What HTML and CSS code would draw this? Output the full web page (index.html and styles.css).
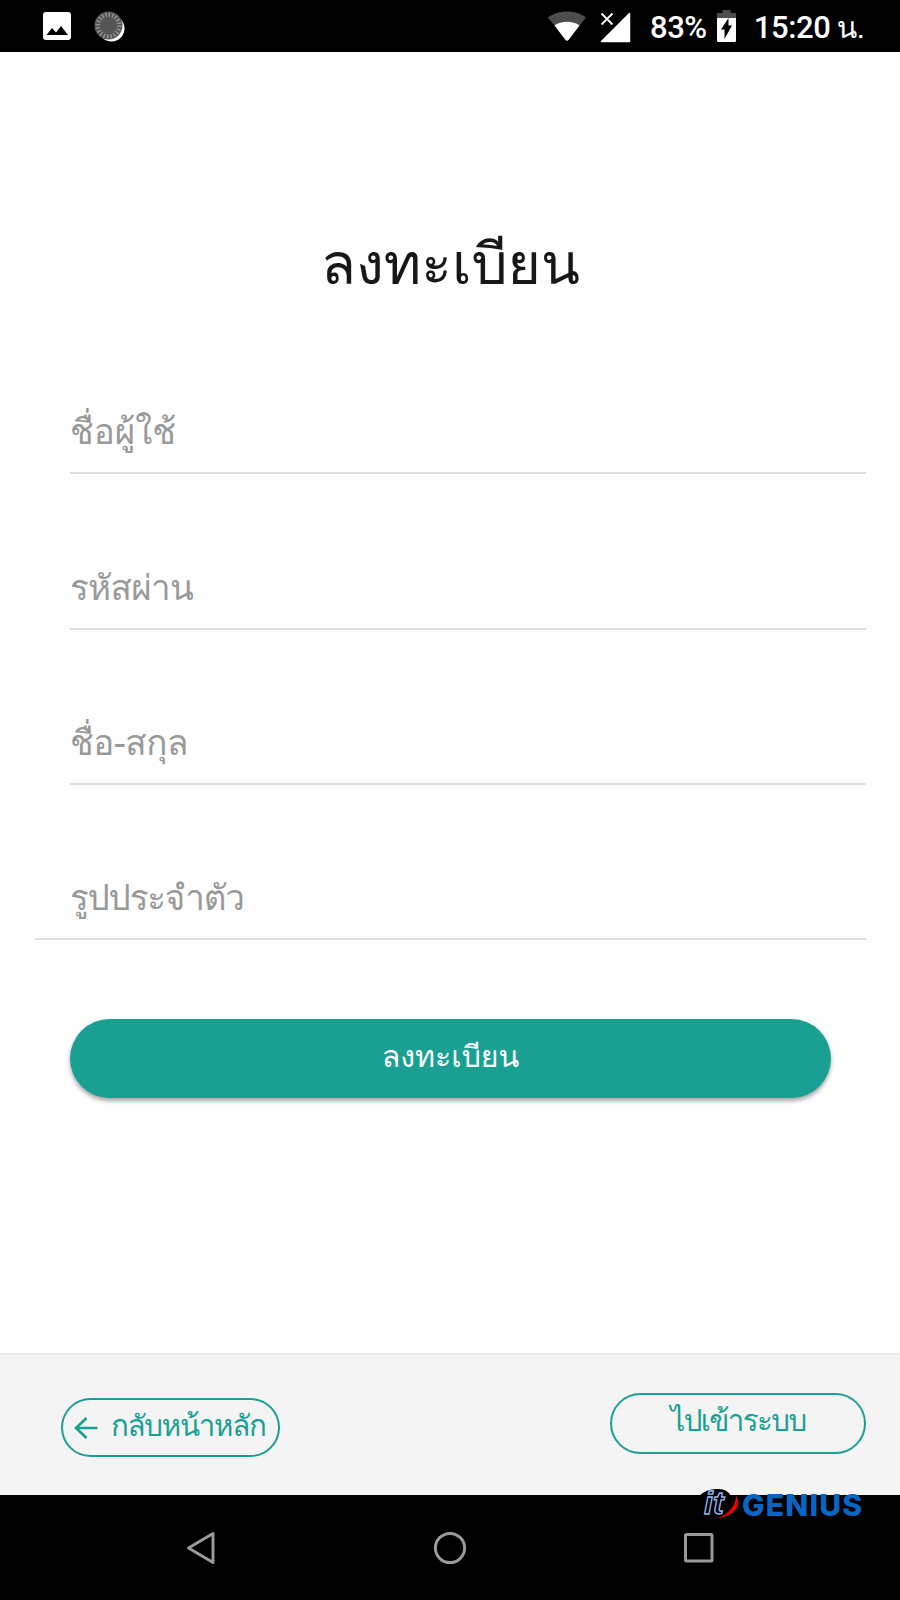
FILE: index.html
```
<!DOCTYPE html>
<html lang="th">
<head>
    <meta charset="UTF-8">
    <meta name="viewport" content="width=device-width, initial-scale=1.0">
    <title>ลงทะเบียน</title>
    <link rel="stylesheet" href="styles.css">
</head>
<body>
    <div class="screen">
        <div class="status-bar">
            <svg class="icon-image" width="30" height="30" viewBox="0 0 30 30">
                <rect x="1" y="1" width="28" height="28" rx="3" fill="#fff"/>
                <path d="M4.500 24l5.500-7 4 4.500 5-6.500 7 9z" fill="#000"/>
            </svg>
            <svg class="icon-sync" width="32" height="32" viewBox="0 0 32 32">
                <circle cx="17.500" cy="17.500" r="13" fill="#fff"/>
                <circle cx="14.500" cy="14.500" r="14" fill="#555"/>
                <circle cx="14.500" cy="14.500" r="10.800" fill="none" stroke="#999" stroke-width="4.500" stroke-dasharray="1.300 2.093"/>
            </svg>
            <div class="status-right">
                <svg class="icon-wifi" width="38" height="30" viewBox="0 0 38 30">
                    <path d="M0 6.500C10-1.500 28-1.500 38 6.500L19 30z" fill="#4d4d4d"/>
                    <path d="M6.500 14.500C13 9.500 25 9.500 31.500 14.500L20.500 29q-1.500 1.500-3 0z" fill="#fff"/>
                </svg>
                <svg class="icon-signal" width="31" height="31" viewBox="0 0 31 31">
                    <path d="M29.500 1.500v28h-28z" fill="#fff" stroke="#fff" stroke-width="1.500" stroke-linejoin="round"/>
                    <path d="M1.500 1.500l11 11M12.500 1.500l-11 11" stroke="#fff" stroke-width="1.800"/>
                </svg>
                <span class="battery-text">83%</span>
                <svg class="icon-battery" width="19" height="32" viewBox="0 0 19 32">
                    <path d="M5.500 0h8v3H19v6H0V3h5.500z" fill="#4d4d4d"/>
                    <path d="M0 8h19v22.500q0 1.500-1.500 1.500h-16Q0 32 0 30.500z" fill="#fff"/>
                    <path d="M11.500 8v7.500H15L7.500 29v-9.500H4z" fill="#000"/>
                </svg>
                <span class="clock">15:20 <span class="clock-unit">น.</span></span>
            </div>
        </div>

        <div class="content">
            <h1>ลงทะเบียน</h1>

            <form class="register-form">
                <div class="field"><label>ชื่อผู้ใช้</label></div>
                <div class="field field-password"><label>รหัสผ่าน</label></div>
                <div class="field field-name"><label>ชื่อ-สกุล</label></div>
                <div class="field field-last"><label>รูปประจำตัว</label></div>
                <button type="button" class="submit-button">ลงทะเบียน</button>
            </form>
        </div>

        <div class="footer">
            <a class="back-button">
                <svg width="24" height="24" viewBox="0 0 24 24">
                    <path d="M12.500 2L2 12l10.500 10M2 12h21.500" fill="none" stroke="#1aa093" stroke-width="2.600"/>
                </svg>
                <span>กลับหน้าหลัก</span>
            </a>
            <a class="login-button">ไปเข้าระบบ</a>
        </div>

        <div class="nav-bar">
            <svg class="nav-back" width="30" height="34" viewBox="0 0 30 34">
                <path d="M27 2.500v29L2.500 17z" fill="none" stroke="#999" stroke-width="3" stroke-linejoin="round"/>
            </svg>
            <svg class="nav-home" width="34" height="34" viewBox="0 0 34 34">
                <circle cx="17" cy="17" r="14.600" fill="none" stroke="#999" stroke-width="3"/>
            </svg>
            <svg class="nav-recent" width="30" height="30" viewBox="0 0 30 30">
                <rect x="1.500" y="1.500" width="26.500" height="26.500" rx="1" fill="none" stroke="#999" stroke-width="3"/>
            </svg>
            <div class="watermark">
                <svg width="42" height="31" viewBox="0 0 42 31">
                    <path d="M0 8Q8 0 20 1q8 0 12 7z" fill="#000"/>
                    <path d="M37 7q5 9-1 15-7 8-19 8 10-2 15-9 5-6 5-14z" fill="#f00000"/>
                    <text x="5" y="26" class="logo-it">it</text>
                </svg>
                <span class="logo-name">GENIUS</span>
            </div>
        </div>
    </div>
</body>
</html>
```
FILE: styles.css
```
* {
    box-sizing: border-box;
}

body {
    margin: 0;
    font-family: Loma, "Liberation Sans", sans-serif;
    background: #fefefe;
}

.screen {
    width: 900px;
    height: 1600px;
    display: flex;
    flex-direction: column;
    overflow: hidden;
}

.status-bar {
    height: 52px;
    background: #000;
    color: #fff;
    display: flex;
    align-items: flex-start;
    padding: 11px 36px 0 42px;
    font-family: Roboto, sans-serif;
    font-size: 31px;
    font-weight: 500;
    line-height: 34px;
    letter-spacing: -0.4px;
}

.icon-sync {
    margin-left: 22px;
}

.status-right {
    display: flex;
    margin-left: auto;
}

.icon-signal {
    margin: 1px 0 0 14px;
}

.battery-text {
    margin-left: 19px;
}

.icon-battery {
    margin: -1px 18px 0 10px;
}

.clock-unit {
    margin-left: -1px;
    font-family: Loma, "Liberation Sans", sans-serif;
    font-size: 30px;
    line-height: 0;
    letter-spacing: -0.8px;
}

.content {
    height: 1301px;
    padding: 171px 34px 0 35px;
}

h1 {
    margin: 0;
    height: 94px;
    line-height: 82px;
    text-align: center;
    font-size: 57px;
    font-weight: 400;
    color: #171717;
}

.register-form {
    padding-top: 2px;
}

.field {
    height: 155.3px;
    margin-left: 35px;
    padding-bottom: 18px;
    border-bottom: 2px solid #dfdfdf;
    display: flex;
    align-items: flex-end;
    color: #999;
    font-size: 35px;
    line-height: 44px;
}

.field-password {
    letter-spacing: -0.7px;
}

.field-name {
    letter-spacing: -0.4px;
}

.field-last {
    margin-left: 0;
    padding-left: 35px;
    letter-spacing: -1.2px;
}

.submit-button {
    display: block;
    width: 761px;
    height: 79px;
    margin: 79px 0 0 35px;
    padding: 0 0 6px;
    border: 0;
    border-radius: 40px;
    background: #1aa093;
    color: #fff;
    font-family: inherit;
    font-size: 30.3px;
    box-shadow: 0 3px 4px rgba(0, 0, 0, 0.35);
}

.footer {
    height: 142px;
    background: #f4f4f4;
    border-top: 2px solid #ebebeb;
    display: flex;
    align-items: flex-start;
    justify-content: space-between;
    padding: 38px 34px 0 61px;
    color: #1aa093;
    font-size: 29.5px;
}

.back-button {
    display: flex;
    align-items: center;
    width: 219px;
    height: 59px;
    margin-top: 5px;
    padding-left: 11px;
    border: 2px solid #1aa093;
    border-radius: 30px;
    gap: 13px;
    white-space: nowrap;
    letter-spacing: -1.3px;
}

.back-button svg {
    flex: none;
}

.back-button span {
    padding-bottom: 5px;
}

.login-button {
    width: 256px;
    height: 61px;
    border: 2px solid #1aa093;
    border-radius: 31px;
    text-align: center;
    line-height: 51px;
    letter-spacing: -1.6px;
}

.nav-bar {
    position: relative;
    height: 105px;
    background: #000;
    display: flex;
    align-items: center;
    justify-content: space-between;
    padding: 0 186px 0 186px;
}

/* logo sits over the edge between footer and nav bar */
.watermark {
    position: absolute;
    left: 699px;
    top: -7px;
    display: flex;
    align-items: flex-start;
}

.watermark svg {
    overflow: visible;
}

.logo-it {
    font: italic bold 32px "Liberation Sans", sans-serif;
    fill: #000;
    stroke: #9ab8f5;
    stroke-width: 1.3px;
}

.logo-name {
    color: #0865c4;
    font: 800 30px/34px Inter, "Liberation Sans", sans-serif;
    letter-spacing: 1.2px;
    margin-left: 1px;
}
```
